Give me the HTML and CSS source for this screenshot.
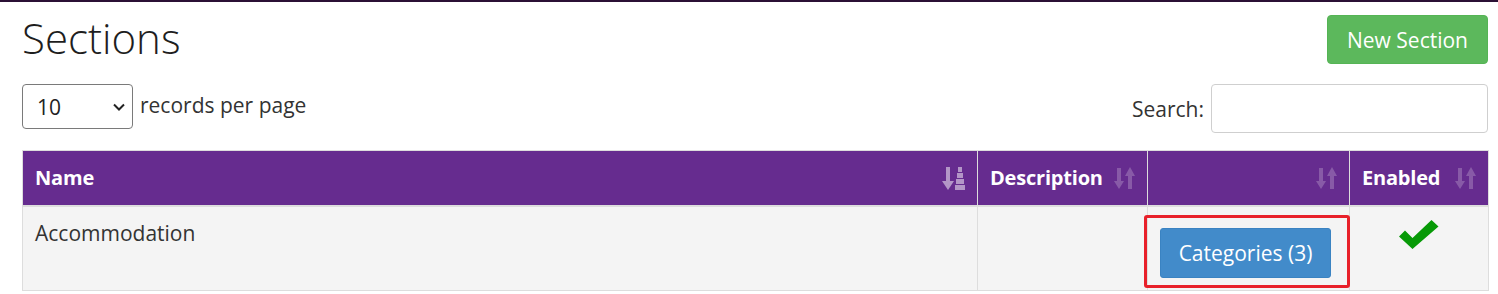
FILE: index.html
```html
<!DOCTYPE html>
<html lang="en">
<head>
<meta charset="utf-8">
<title>Sections</title>
<link rel="stylesheet" href="styles.css">
</head>
<body>
<div class="page">
  <div class="title-row">
    <h1 class="title">Sections</h1>
    <a class="btn btn-success">New Section</a>
  </div>
  <div class="controls-row">
    <div class="length">
      <div class="select"><span>10</span>
        <svg class="chev" width="12" height="8" viewBox="0 0 12 8"><path d="M1 1.5 L6 6.5 L11 1.5" fill="none" stroke="#222" stroke-width="2"/></svg>
      </div>
      <span class="length-label">records per page</span>
    </div>
    <div class="search">
      <span class="search-label">Search:</span>
      <div class="input"></div>
    </div>
  </div>
  <table class="grid">
    <colgroup>
      <col class="c-name"><col class="c-desc"><col class="c-cat"><col class="c-en">
    </colgroup>
    <thead>
      <tr>
        <th><div class="th-in"><span>Name</span>
          <svg class="sort sorted" width="24" height="24" viewBox="0 0 24 24"><rect x="4" y="1" width="4" height="15"/><polygon points="0,15 12,15 6,24"/><rect x="16" y="1" width="4" height="5"/><rect x="15" y="7" width="6" height="5"/><rect x="14" y="13" width="8" height="5"/><rect x="13" y="19" width="10" height="5"/></svg>
        </div></th>
        <th><div class="th-in"><span>Description</span>
          <svg class="sort" width="22" height="22" viewBox="0 0 22 22"><rect x="3" y="1" width="4" height="14"/><polygon points="0,14 10,14 5,22"/><polygon points="11,9 21,9 16,0"/><rect x="14" y="8" width="4" height="14"/></svg>
        </div></th>
        <th><div class="th-in"><span></span>
          <svg class="sort" width="22" height="22" viewBox="0 0 22 22"><rect x="3" y="1" width="4" height="14"/><polygon points="0,14 10,14 5,22"/><polygon points="11,9 21,9 16,0"/><rect x="14" y="8" width="4" height="14"/></svg>
        </div></th>
        <th><div class="th-in"><span>Enabled</span>
          <svg class="sort" width="22" height="22" viewBox="0 0 22 22"><rect x="3" y="1" width="4" height="14"/><polygon points="0,14 10,14 5,22"/><polygon points="11,9 21,9 16,0"/><rect x="14" y="8" width="4" height="14"/></svg>
        </div></th>
      </tr>
    </thead>
    <tbody>
      <tr>
        <td>Accommodation</td>
        <td></td>
        <td class="cat-cell">
          <a class="btn btn-primary">Categories (3)</a>
          <span class="highlight"></span>
        </td>
        <td class="en-cell">
          <svg class="check" width="40" height="29" viewBox="0 0 40 29"><polygon points="0,16.5 6,10.5 13.5,18 32.5,0 39.5,6.5 13.5,29" fill="#079a07"/></svg>
        </td>
      </tr>
    </tbody>
  </table>
</div>
</body>
</html>
```
FILE: styles.css
```css
html, body {
  margin: 0;
  padding: 0;
  background: #fff;
}
body {
  border-top: 2px solid #2b1035;
  font-family: "Open Sans", "Liberation Sans", sans-serif;
  font-size: 21px;
  line-height: 28px;
  color: #333;
}
.page {
  padding: 13px 10px 0 22px;
}
.title-row {
  display: flex;
  justify-content: space-between;
  align-items: flex-start;
}
.title {
  margin: 0;
  font-weight: 300;
  font-size: 42px;
  line-height: 46px;
  color: #1e1e1e;
}
.btn {
  display: inline-flex;
  align-items: center;
  justify-content: center;
  box-sizing: border-box;
  height: 49px;
  padding: 0 19px;
  border: 1px solid transparent;
  border-radius: 4px;
  color: #fff;
  font-size: 21px;
  text-decoration: none;
}
.btn-success {
  background: #5cb85c;
  border-color: #55b455;
}
.btn-primary {
  display: flex;
  width: 171px;
  height: 50px;
  padding: 0;
  margin-top: 9px;
  background: #428bca;
  border-color: #3a83c2;
  border-radius: 3px;
}
.controls-row {
  display: flex;
  justify-content: space-between;
  align-items: flex-start;
  margin-top: 20px;
}
.length, .search {
  display: flex;
  align-items: center;
}
.select {
  box-sizing: border-box;
  width: 111px;
  height: 45px;
  border: 1px solid #7a7a7a;
  border-radius: 4px;
  display: flex;
  align-items: center;
  justify-content: space-between;
  padding: 0 7px 0 14px;
  color: #222;
}
.length-label {
  margin-left: 7px;
  margin-top: -3px;
}
.search-label {
  margin-right: 7px;
}
.input {
  box-sizing: border-box;
  width: 277px;
  height: 49px;
  border: 1px solid #cfcfcf;
  border-radius: 4px;
}
.grid {
  margin-top: 17px;
  width: 1466px;
  border-collapse: collapse;
  table-layout: fixed;
  border: 1px solid #ddd;
}
.c-name { width: 955px; }
.c-desc { width: 170px; }
.c-cat { width: 202px; }
.c-en { width: 139px; }
.grid th {
  background: #662c8f;
  color: #fff;
  font-size: 20px;
  font-weight: 700;
  text-align: left;
  padding: 13px 11px 13px 12px;
  border-left: 1px solid #ddd;
  border-bottom: 2px solid #ddd;
  letter-spacing: -0.2px;
}
.th-in {
  display: flex;
  justify-content: space-between;
  align-items: center;
}
.sort {
  fill: #fff;
  opacity: 0.22;
}
.sort.sorted {
  opacity: 0.5;
}
.grid td {
  background: #f4f4f4;
  vertical-align: top;
  padding: 12px;
  border-left: 1px solid #ddd;
  border-bottom: 1px solid #ddd;
}
.cat-cell {
  position: relative;
}
.highlight {
  position: absolute;
  left: -4px;
  top: 8px;
  box-sizing: border-box;
  width: 206px;
  height: 73px;
  border: 3px solid #e8202a;
  border-radius: 3px;
}
.en-cell .check {
  display: block;
  margin: 1px auto 0;
}
```
